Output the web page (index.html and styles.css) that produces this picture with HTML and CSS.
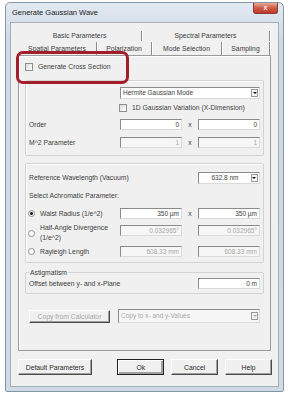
FILE: index.html
```html
<!DOCTYPE html>
<html lang="en">
<head>
    <meta charset="UTF-8">
    <title>Generate Gaussian Wave</title>
    <link rel="stylesheet" href="styles.css">
</head>
<body>
    <div class="window">
        <div class="titlebar">
            <span>Generate Gaussian Wave</span>
            <div class="close">x</div>
        </div>

        <div class="client">
            <div class="tabs">
                <div class="tabrow back">
                    <div class="tab w124">Basic Parameters</div>
                    <div class="tab w128">Spectral Parameters</div>
                </div>
                <div class="tabrow front">
                    <div class="tab w79">Spatial Parameters</div>
                    <div class="tab w55">Polarization</div>
                    <div class="tab w70">Mode Selection</div>
                    <div class="tab w48">Sampling</div>
                </div>
            </div>

            <div class="page">
                <div class="check cross"><span class="box"></span>Generate Cross Section</div>

                <div class="group first">
                    <div class="row">
                        <span></span>
                        <div class="select wide"><span>Hermite Gaussian Mode</span><span class="arrow"></span></div>
                    </div>
                    <div class="row r-check">
                        <span></span>
                        <div class="check span3"><span class="box"></span>1D Gaussian Variation (X-Dimension)</div>
                    </div>
                    <div class="row r-order">
                        <span>Order</span>
                        <div class="field">0</div>
                        <span class="x">x</span>
                        <div class="field">0</div>
                    </div>
                    <div class="row r-m2">
                        <span>M^2 Parameter</span>
                        <div class="field off">1</div>
                        <span class="x">x</span>
                        <div class="field off">1</div>
                    </div>
                </div>

                <div class="group second">
                    <div class="row">
                        <span class="span3">Reference Wavelength (Vacuum)</span>
                        <div class="select"><span></span><span>632.8 nm</span><span class="arrow"></span></div>
                    </div>
                    <div class="sub">Select Achromatic Parameter:</div>
                    <div class="row r-waist">
                        <div class="opt"><span class="radio on"></span>Waist Radius (1/e^2)</div>
                        <div class="field">350 µm</div>
                        <span class="x">x</span>
                        <div class="field">350 µm</div>
                    </div>
                    <div class="row r-half">
                        <div class="opt"><span class="radio"></span><span>Half-Angle Divergence<br>(1/e^2)</span></div>
                        <div class="field off">0.032965°</div>
                        <span></span>
                        <div class="field off">0.032965°</div>
                    </div>
                    <div class="row r-ray">
                        <div class="opt"><span class="radio"></span>Rayleigh Length</div>
                        <div class="field off">608.33 mm</div>
                        <span></span>
                        <div class="field off">608.33 mm</div>
                    </div>
                </div>

                <fieldset class="astig">
                    <legend>Astigmatism</legend>
                    <div class="row">
                        <span class="span3">Offset between y- and x-Plane</span>
                        <div class="field">0 m</div>
                    </div>
                </fieldset>

                <div class="copyrow">
                    <button class="btn copy" disabled>Copy from Calculator</button>
                    <div class="select off"><span>Copy to x- and y-Values</span><span class="arrow"></span></div>
                </div>
            </div>

            <div class="buttons">
                <button class="btn defaults">Default Parameters</button>
                <div class="right">
                    <button class="btn small primary">Ok</button>
                    <button class="btn small">Cancel</button>
                    <button class="btn small">Help</button>
                </div>
            </div>
        </div>

        <div class="highlight"></div>
    </div>
</body>
</html>
```

FILE: styles.css
```css
body {
    margin: 0;
    background: #fff;
    font-family: "Liberation Sans", Arial, sans-serif;
    font-size: 6.8px;
    line-height: 10px;
    color: #3c3c3c;
}
.window {
    position: relative;
    width: 279px;
    height: 390px;
    margin: 2px 0 0 5px;
    box-sizing: border-box;
    border: 1px solid #8794a1;
    border-radius: 5px 5px 2px 2px;
    background: linear-gradient(#e2e9f1, #cdd9e5 40px, #cfdae6);
    padding: 0 4px 4px;
    display: flex;
    flex-direction: column;
}
.titlebar {
    height: 19px;
    display: flex;
    justify-content: space-between;
    align-items: center;
    padding-left: 2px;
    font-size: 7.5px;
    color: #222;
}
.close {
    align-self: flex-start;
    width: 25px;
    height: 11px;
    box-sizing: border-box;
    margin-right: 1px;
    border: 1px solid #8a3b33;
    border-top: none;
    border-radius: 0 0 3px 3px;
    background: linear-gradient(#e8a99c, #cf5a45 50%, #c0392a);
    color: #fff;
    font-weight: bold;
    font-size: 7px;
    line-height: 10px;
    text-align: center;
}
.client {
    flex: 1;
    background: #f0f0f0;
    border: 1px solid #a3aebb;
    padding: 6px 7px 0;
}

/* tab headers */
.tabs { height: 26px; }
.tabrow { display: flex; height: 13px; }
.tab {
    box-sizing: border-box;
    display: flex;
    align-items: center;
    justify-content: center;
    border-right: 1px solid #8c8c8c;
    box-shadow: 1px 0 #fff;
}
.back .tab { margin: 2px 0 1px; }
.w124 { width: 124px; }
.w128 { width: 128px; }
.w79 { width: 79px; }
.w55 { width: 55px; }
.w70 { width: 70px; }
.w48 { width: 48px; }

.page {
    height: 296px;
    box-sizing: border-box;
    border: 1px solid #9a9a9a;
    box-shadow: inset 1px 1px #fff;
    padding: 6px 6px 0;
}

.check { display: flex; align-items: center; }
.box {
    width: 6px;
    height: 6px;
    border: 1px solid #8e8f8f;
    background: linear-gradient(135deg, #dcdcdc, #fff);
    margin-right: 5px;
}
.cross { height: 10px; margin-bottom: 8px; }

.group {
    border: 1px solid #d3d3d3;
    border-radius: 2px;
    box-shadow: inset 1px 1px #fff;
    padding: 6px 3px 7px;
}
.second { margin-top: 7px; padding: 8px 3px 5px; }

.row {
    display: grid;
    grid-template-columns: 91px 62px 16px 62px;
    align-items: center;
}
.span3 { grid-column: 1 / 4; }
.r-check { margin-top: 4px; }
.r-check .check { grid-column: 2 / 5; margin-left: -1px; }
.r-order { margin-top: 6px; }
.r-m2 { margin-top: 7px; }
.r-waist { margin-top: 7px; }
.r-half { margin-top: 4px; align-items: start; }
.r-half .field { margin-top: 2px; }
.r-half .opt { height: 20px; }
.r-ray { margin-top: 3px; }
.sub { margin-top: 7px; height: 10px; }

.field {
    height: 11px;
    box-sizing: border-box;
    border: 1px solid;
    border-color: #8a8b8c #dadada #dadada #8a8b8c;
    background: #fff;
    text-align: right;
    padding-right: 2px;
    line-height: 9px;
    font-size: 6.5px;
}
.field.off { background: #f6f6f6; color: #a8a8a8; }
.x { text-align: center; }

.select {
    height: 12px;
    box-sizing: border-box;
    border: 1px solid;
    border-color: #8a8b8c #dadada #dadada #8a8b8c;
    background: #fff;
    display: flex;
    align-items: center;
    justify-content: space-between;
    padding-left: 2px;
    font-size: 6.5px;
}
.select.wide { grid-column: 2 / 5; }
.select.off { color: #a8a8a8; background: #f6f6f6; }
.arrow {
    width: 7px;
    height: 8px;
    box-sizing: border-box;
    margin: 0 1px 0 2px;
    border: 1px solid #9a9a9a;
    background: #f4f4f4;
    display: flex;
    align-items: center;
    justify-content: center;
}
.arrow::after {
    content: "";
    border-left: 2px solid transparent;
    border-right: 2px solid transparent;
    border-top: 2px solid #111;
}
.select.off .arrow::after { border-top-color: #aaa; }

.opt { display: flex; align-items: center; margin-left: -1px; }
.radio {
    flex: none;
    width: 5px;
    height: 5px;
    border: 1px solid #8e8f8f;
    border-radius: 50%;
    background: #fff;
    margin-right: 5px;
}
.radio.on { background: radial-gradient(circle, #222 0 1.2px, #fff 1.8px); }

.astig {
    margin: 5px 0 0;
    padding: 0 3px 4px;
    border: 1px solid #d3d3d3;
    border-radius: 2px;
    min-width: 0;
}
.astig legend { padding: 0 1px; line-height: 9px; }
.astig .row { margin-top: 1px; }

.copyrow {
    display: flex;
    justify-content: space-between;
    align-items: center;
    margin: 15px 4px 0;
}
.copyrow .select { width: 142px; height: 14px; }

.btn {
    height: 16px;
    box-sizing: border-box;
    border: 1px solid;
    border-color: #fff #4a4a4a #4a4a4a #fff;
    box-shadow: inset -1px -1px #a0a0a0;
    background: #f0f0f0;
    font-family: inherit;
    font-size: 6.8px;
    color: #2a2a2a;
    padding: 0;
}
.btn.copy { width: 81px; height: 13px; color: #a8a8a8; }
.btn.defaults { width: 74px; }
.btn.small { width: 47px; margin-left: 5px; }
.btn.primary {
    border-color: #222;
    box-shadow: inset 1px 1px #fff, inset -2px -2px #a0a0a0;
}
.buttons {
    display: flex;
    justify-content: space-between;
    margin-top: 8px;
    margin-right: -1px;
}

.highlight {
    position: absolute;
    left: 10px;
    top: 48px;
    width: 113px;
    height: 33px;
    box-sizing: border-box;
    border: 3px solid #a31d2c;
    border-radius: 7px;
}
```
